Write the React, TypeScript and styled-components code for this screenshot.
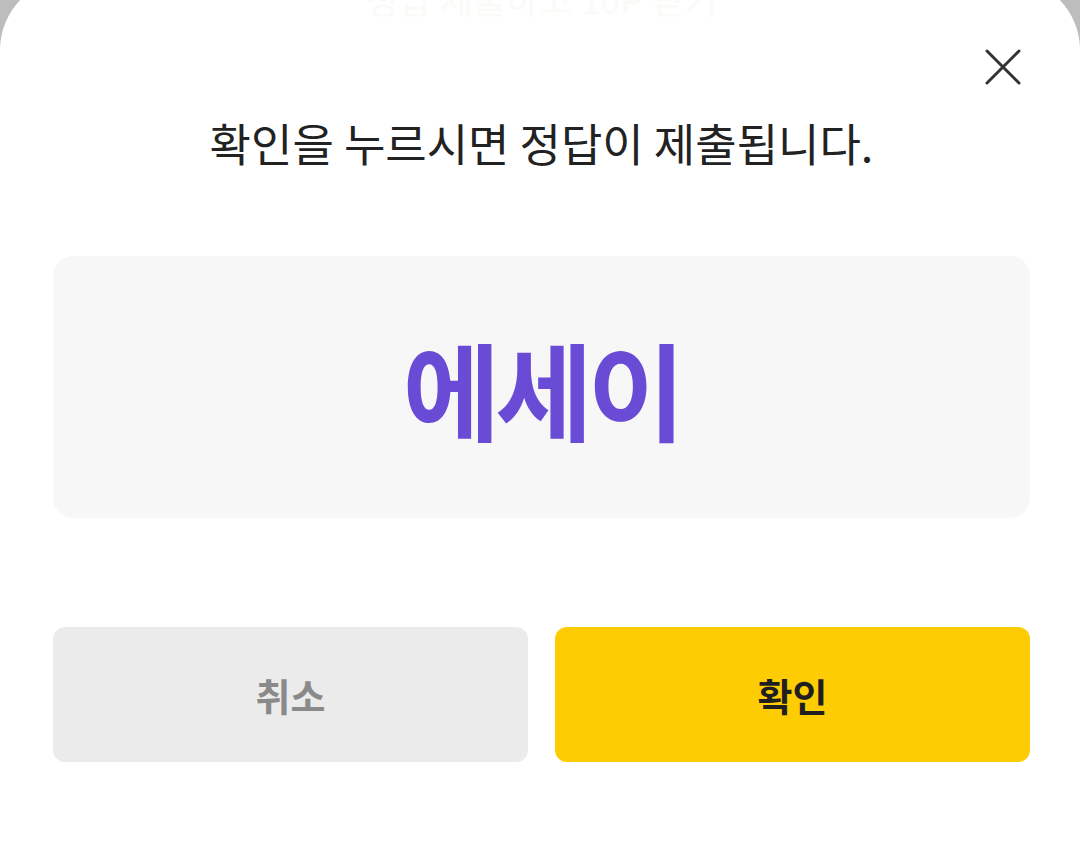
import styled, { createGlobalStyle } from 'styled-components';

const GlobalStyle = createGlobalStyle`
  html, body {
    margin: 0;
    padding: 0;
    background: #bdbdbd;
  }
  body {
    font-family: 'Noto Sans CJK KR', 'Noto Sans', sans-serif;
  }
`;

const CloseIcon = () => (
  <svg width='36' height='36' viewBox='0 0 36 36' fill='none'>
    <path d='M2 2L34 34M34 2L2 34' stroke='#333' strokeWidth='3' strokeLinecap='round' />
  </svg>
);

export default function App() {
  return (
    <Page>
      <GlobalStyle />
      <Sheet>
        <Header>
          <GhostTitle>정답 제출하고 10P 받기</GhostTitle>
          <CloseButton aria-label='닫기'>
            <CloseIcon />
          </CloseButton>
        </Header>
        <Message>확인을 누르시면 정답이 제출됩니다.</Message>
        <AnswerBox>
          <Answer>에세이</Answer>
        </AnswerBox>
        <Actions>
          <ActionButton variant='cancel'>취소</ActionButton>
          <ActionButton variant='confirm'>확인</ActionButton>
        </Actions>
      </Sheet>
    </Page>
  );
}

const Page = styled('div')`
  height: 100vh;
  overflow: hidden;
`;

const Sheet = styled('div')`
  margin-top: -22px;
  min-height: 900px;
  background: #fff;
  border-radius: 72px 72px 0 0;
  padding: 62px 50px 0 53px;
  display: flex;
  flex-direction: column;
  box-sizing: border-box;
`;

const Header = styled('div')`
  position: relative;
  display: flex;
  justify-content: flex-end;
`;

const GhostTitle = styled('div')`
  position: absolute;
  top: -68px;
  left: 0;
  right: 0;
  text-align: center;
  font-size: 36px;
  font-weight: 400;
  color: #fafaf6;
  pointer-events: none;
`;

const CloseButton = styled('button')`
  width: 54px;
  height: 54px;
  padding: 0;
  border: 0;
  background: transparent;
  display: flex;
  align-items: center;
  justify-content: center;
  cursor: pointer;
`;

const Message = styled('p')`
  margin: 19px 0 0;
  text-align: center;
  font-size: 45px;
  line-height: 60px;
  font-weight: 400;
  color: #222;
`;

const AnswerBox = styled('div')`
  margin-top: 83px;
  height: 262px;
  border-radius: 20px;
  background: #f7f7f8;
  display: flex;
  align-items: center;
  justify-content: center;
`;

const Answer = styled('span')`
  font-size: 106px;
  font-weight: 700;
  color: #6a4bd6;
  letter-spacing: -5px;
  line-height: 1;
`;

const Actions = styled('div')`
  margin-top: 109px;
  display: grid;
  grid-template-columns: 1fr 1fr;
  gap: 27px;
`;

const ActionButton = styled('button')<{ variant: 'cancel' | 'confirm' }>`
  height: 135px;
  border: 0;
  border-radius: 12px;
  font-family: 'Noto Sans CJK KR', 'Noto Sans', sans-serif;
  font-size: 38px;
  font-weight: 700;
  background: ${(p) => (p.variant === 'confirm' ? '#fecc02' : '#ebebeb')};
  color: ${(p) => (p.variant === 'confirm' ? '#1f1f1f' : '#8a8a8a')};
  cursor: pointer;
`;
